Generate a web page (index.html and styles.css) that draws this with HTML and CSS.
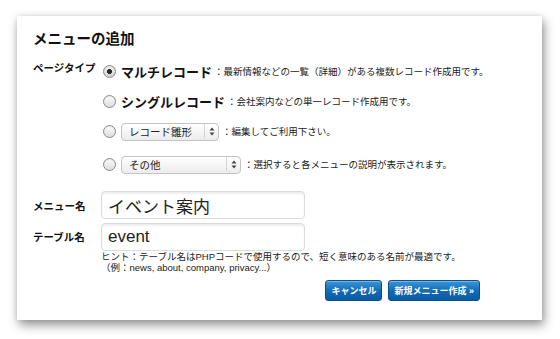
FILE: index.html
```html
<!DOCTYPE html>
<html lang="ja">
<head>
<meta charset="utf-8">
<title>メニューの追加</title>
<link rel="stylesheet" href="styles.css">
</head>
<body>
<div class="stage">
<div class="card">
  <h1 class="title">メニューの追加</h1>
  <form class="form">
    <div class="field field-type">
      <div class="label label-top">ページタイプ</div>
      <div class="options">
        <label class="option">
          <input type="radio" name="type" class="radio" checked>
          <span class="opt-name">マルチレコード</span>
          <span class="opt-desc">：最新情報などの一覧（詳細）がある複数レコード作成用です。</span>
        </label>
        <label class="option">
          <input type="radio" name="type" class="radio">
          <span class="opt-name">シングルレコード</span>
          <span class="opt-desc">：会社案内などの単一レコード作成用です。</span>
        </label>
        <label class="option">
          <input type="radio" name="type" class="radio">
          <span class="select-wrap select-short">
            <select class="select"><option>レコード雛形</option></select>
            <span class="select-arrow"><svg width="6" height="9" viewBox="0 0 6 9"><path d="M3 0.5 L5.5 3.5 H0.5 Z M3 8.5 L5.5 5.5 H0.5 Z" fill="#444"/></svg></span>
          </span>
          <span class="opt-desc">：編集してご利用下さい。</span>
        </label>
        <label class="option option-last">
          <input type="radio" name="type" class="radio">
          <span class="select-wrap select-long">
            <select class="select"><option>その他</option></select>
            <span class="select-arrow"><svg width="6" height="9" viewBox="0 0 6 9"><path d="M3 0.5 L5.5 3.5 H0.5 Z M3 8.5 L5.5 5.5 H0.5 Z" fill="#444"/></svg></span>
          </span>
          <span class="opt-desc">：選択すると各メニューの説明が表示されます。</span>
        </label>
      </div>
    </div>

    <div class="field field-menu">
      <div class="label">メニュー名</div>
      <input class="text-input" type="text" value="イベント案内">
    </div>

    <div class="field field-table">
      <div class="label">テーブル名</div>
      <div class="input-col">
        <input class="text-input" type="text" value="event">
        <p class="hint">ヒント：テーブル名はPHPコードで使用するので、短く意味のある名前が最適です。<br>（例：news, about, company, privacy...）</p>
      </div>
    </div>

    <div class="actions">
      <button type="button" class="btn">キャンセル</button>
      <button type="button" class="btn">新規メニュー作成 »</button>
    </div>
  </form>
</div>
</div>
</body>
</html>
```

FILE: styles.css
```css
html, body {
  margin: 0;
  padding: 0;
  background: #fff;
  overflow: hidden;
}

.stage {
  box-sizing: border-box;
  width: 560px;
  height: 339px;
  padding: 16px 0 0 17px;
  font-family: "Liberation Sans", "Noto Sans CJK JP", sans-serif;
  color: #111;
}

.card {
  box-sizing: border-box;
  width: 525px;
  height: 304px;
  padding: 13px 16px 0 16px;
  background: #fff;
  box-shadow: 2px 5px 10px rgba(0, 0, 0, 0.42), 0 0 5px rgba(0, 0, 0, 0.1);
}

.title {
  margin: 0;
  font-size: 14.5px;
  line-height: 20px;
  font-weight: bold;
  color: #111;
}

.form {
  width: 447px;
  margin: 0;
}

.field {
  display: flex;
  align-items: center;
}

.label {
  width: 68px;
  flex: none;
  font-size: 10.5px;
  font-weight: bold;
  color: #111;
}

.field-type {
  align-items: flex-start;
  margin-top: 13px;
}

.label-top {
  line-height: 12px;
  margin-top: 0;
}

.options {
  display: flex;
  flex-direction: column;
  gap: 12px;
}

.option {
  display: flex;
  align-items: center;
  height: 18px;
  white-space: nowrap;
}

.option-last {
  margin-top: 3px;
}

.radio {
  appearance: none;
  -webkit-appearance: none;
  box-sizing: border-box;
  width: 13px;
  height: 13px;
  margin: 0 5px 0 2px;
  border: 1px solid #8a8a8a;
  border-radius: 50%;
  background: linear-gradient(#fdfdfd, #dcdcdc);
  box-shadow: inset 0 1px 1px rgba(0, 0, 0, 0.08);
}

.radio:checked {
  background: radial-gradient(circle, #2a2a2a 0, #2a2a2a 2.2px, transparent 2.8px), linear-gradient(#f4f4f4, #cfcfcf);
}

.opt-name {
  font-size: 13px;
  font-weight: bold;
  color: #111;
}

.opt-desc {
  font-size: 9.5px;
  color: #222;
  margin-left: 2px;
}

.select-wrap {
  position: relative;
  display: inline-block;
  height: 18px;
  margin-right: 1px;
}

.select-short {
  width: 98px;
}

.select-long {
  width: 120px;
}

.select {
  appearance: none;
  -webkit-appearance: none;
  box-sizing: border-box;
  width: 100%;
  height: 18px;
  margin: 0;
  padding: 0 0 0 7px;
  border: 1px solid #c4c4c4;
  border-radius: 4px;
  background: linear-gradient(#ffffff, #ececec);
  font-family: "Liberation Sans", "Noto Sans CJK JP", sans-serif;
  font-size: 10.5px;
  color: #222;
}

.select-arrow {
  position: absolute;
  top: 2px;
  right: 1px;
  width: 13px;
  height: 14px;
  border-left: 1px solid #d4d4d4;
  display: flex;
  align-items: center;
  justify-content: center;
  pointer-events: none;
}

.field-menu {
  margin-top: 18px;
}

.field-table {
  align-items: flex-start;
  margin-top: 4px;
}

.field-table .label {
  line-height: 28px;
}

.text-input {
  box-sizing: border-box;
  width: 204px;
  height: 28px;
  margin: 0;
  padding: 0 6px;
  border: 1px solid #dcdcdc;
  border-radius: 4px;
  background: #fff;
  box-shadow: inset 0 2px 2px rgba(0, 0, 0, 0.07);
  font-family: "Liberation Sans", "Noto Sans CJK JP", sans-serif;
  font-size: 17px;
  color: #222;
}

.input-col {
  display: flex;
  flex-direction: column;
}

.hint {
  margin: 0;
  font-size: 9.5px;
  line-height: 11px;
  color: #222;
  white-space: nowrap;
}

.actions {
  display: flex;
  justify-content: flex-end;
  gap: 6px;
  margin-top: 7px;
}

.btn {
  height: 21px;
  margin: 0;
  padding: 0 5px;
  border: 1px solid #0b4f8e;
  border-radius: 3px;
  background: linear-gradient(#3b95d8, #1369b3 55%, #0a5aa2);
  color: #fff;
  font-family: "Liberation Sans", "Noto Sans CJK JP", sans-serif;
  font-size: 9px;
  font-weight: bold;
  box-shadow: inset 0 1px 0 rgba(255, 255, 255, 0.3);
}
```
